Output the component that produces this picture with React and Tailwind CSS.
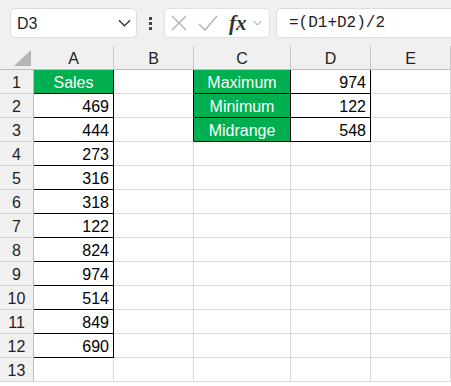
import clsx from 'clsx';

const sales = [469, 444, 273, 316, 318, 122, 824, 974, 514, 849, 690];
const summary = [
  ['Maximum', 974],
  ['Minimum', 122],
  ['Midrange', 548],
];

const cols = [
  { key: 'A', w: 'w-[80px]' },
  { key: 'B', w: 'w-[80px]' },
  { key: 'C', w: 'w-[97px]' },
  { key: 'D', w: 'w-[80px]' },
  { key: 'E', w: 'w-[80px]' },
];

function Cell({ w, green, right, rBlack, bBlack, children }) {
  return (
    <div
      className={clsx(
        'h-6 shrink-0 flex items-center border-r border-b text-[16px] leading-none pt-[2px]',
        w,
        rBlack ? 'border-r-black' : 'border-r-[#dadada]',
        bBlack ? 'border-b-black' : 'border-b-[#dadada]',
        green && 'bg-[#00b050] text-white justify-center',
        right && 'justify-end pr-[4px] text-black'
      )}
    >
      {children}
    </div>
  );
}

function Chevron({ className }) {
  return (
    <svg viewBox="0 0 14 8" className={className} fill="none" stroke="currentColor" strokeWidth="1.4">
      <path d="M1 1l6 6 6-6" />
    </svg>
  );
}

export default function App() {
  const rows = Array.from({ length: 13 }, (_, i) => i + 1);

  return (
    <div className="w-[451px] h-[386px] overflow-hidden bg-white" style={{ fontFamily: '"Liberation Sans", Arial, sans-serif' }}>
      {/* formula bar */}
      <div className="h-[46px] bg-[#f0f0f0] flex items-start pt-[8px] pl-[10px]">
        <div className="w-[127px] h-[30px] bg-white border border-[#dcdcdc] rounded-[5px] flex items-center pl-[6px] pr-[5px]">
          <span className="text-[16px] text-[#1f1f1f] flex-1 pt-[1px]">D3</span>
          <Chevron className="w-[13px] h-[8px] text-[#333]" />
        </div>
        <div className="w-[27px] h-[30px] flex flex-col items-center justify-center gap-[2px]">
          <span className="w-[3px] h-[3px] bg-[#444]" />
          <span className="w-[3px] h-[3px] bg-[#444]" />
          <span className="w-[3px] h-[3px] bg-[#444]" />
        </div>
        <div className="w-[106px] h-[30px] bg-white border border-[#e0e0e0] rounded-[5px] flex items-center pl-[6px]">
          <svg viewBox="0 0 16 16" className="w-[16px] h-[16px] text-[#b0b0b0]" fill="none" stroke="currentColor" strokeWidth="1.3">
            <path d="M1 1l14 14M15 1L1 15" />
          </svg>
          <svg viewBox="0 0 20 16" className="w-[20px] h-[16px] ml-[11px] text-[#b0b0b0]" fill="none" stroke="currentColor" strokeWidth="1.3">
            <path d="M1 9l6 6L19 1" />
          </svg>
          <span className="ml-[11px] text-[21px] italic font-semibold text-[#333] leading-none" style={{ fontFamily: '"Liberation Serif", serif' }}>
            fx
          </span>
          <Chevron className="ml-[6px] w-[9px] h-[6px] text-[#888]" />
        </div>
        <div className="ml-[6px] flex-1 h-[30px] bg-white border border-r-0 border-[#dcdcdc] rounded-l-[5px] flex items-center pl-[12px]">
          <span className="text-[16px] text-[#1f1f1f]" style={{ fontFamily: '"Liberation Mono", monospace' }}>
            =(D1+D2)/2
          </span>
        </div>
      </div>

      {/* column headers */}
      <div className="flex h-6 bg-[#f0f0f0] border-b border-[#bdbdbd]">
        <div className="w-[34px] shrink-0 border-r border-[#f0f0f0] relative">
          <svg viewBox="0 0 17 16" className="absolute left-[14px] top-[4px] w-[17px] h-[16px]">
            <path d="M17 0V16H0Z" fill="#b4b4b4" />
          </svg>
        </div>
        {cols.map((c) => (
          <div key={c.key} className={clsx('shrink-0 border-r border-[#c6c6c6] flex items-center justify-center text-[16px] text-[#222] pt-[2px]', c.w)}>
            {c.key}
          </div>
        ))}
      </div>

      {/* grid */}
      {rows.map((r) => {
        const sale = r === 1 ? 'Sales' : sales[r - 2];
        const inA = r <= 12;
        const inC = r <= 3;
        return (
          <div key={r} className="flex">
            <div className="w-[34px] h-6 shrink-0 bg-[#f0f0f0] border-r border-b border-r-[#bdbdbd] border-b-[#d4d4d4] flex items-center justify-center text-[16px] text-[#222] pt-[2px]">
              {r}
            </div>
            <Cell w="w-[80px]" green={r === 1} right={r > 1} rBlack={inA} bBlack={inA}>
              {inA ? sale : null}
            </Cell>
            <Cell w="w-[80px]" rBlack={inC} />
            <Cell w="w-[97px]" green={inC} rBlack={inC} bBlack={inC}>
              {inC ? summary[r - 1][0] : null}
            </Cell>
            <Cell w="w-[80px]" right={inC} rBlack={inC} bBlack={inC}>
              {inC ? summary[r - 1][1] : null}
            </Cell>
            <Cell w="w-[80px]" />
          </div>
        );
      })}
    </div>
  );
}
